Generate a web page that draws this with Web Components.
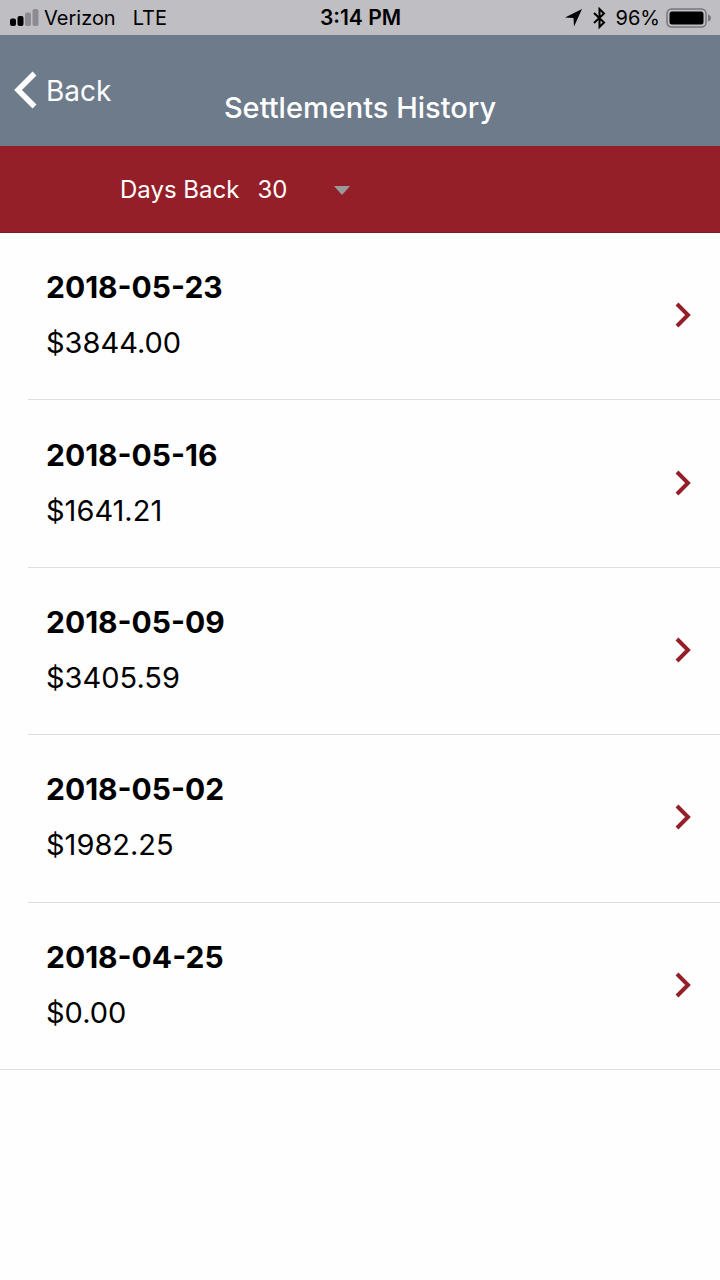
<!DOCTYPE html>
<html lang="en">
<head>
<meta charset="utf-8">
<meta name="viewport" content="width=device-width, initial-scale=1">
<title>Settlements History</title>
<style>
  body { margin: 0; background: #fefefe; color: #000; font-family: Inter, "Liberation Sans", sans-serif; }
</style>
</head>
<body>
<settlements-page></settlements-page>
<script>
class StatusBar extends HTMLElement {
  constructor() {
    super();
    this.attachShadow({ mode: 'open' }).innerHTML = `
      <style>
        :host { display: grid; grid-template-columns: 1fr auto 1fr; align-items: center; padding: 1px 9px 0 10px; background: #bfbec3; font-size: 20px; line-height: 34px; }
        div { display: flex; align-items: center; }
        .signal { margin-right: 5px; }
        .net { margin-left: 17px; }
        .time { font-size: 21px; font-weight: 600; }
        .right { justify-content: flex-end; }
        .bt { margin: 0 10px 0 11px; }
        .battery { margin-left: 6px; }
        svg { display: block; flex: none; }
      </style>
      <div>
        <svg class="signal" width="29" height="18" viewBox="0 0 29 18" aria-hidden="true">
          <rect x="0" y="9.500" width="6" height="7.500" rx="2"/><rect x="7.500" y="7" width="6" height="10" rx="2"/>
          <rect x="15" y="3.500" width="6" height="13.500" rx="2" fill="#8c8b91"/><rect x="22.500" y="0" width="6" height="17" rx="2" fill="#8c8b91"/>
        </svg>
        <span>Verizon</span><span class="net">LTE</span>
      </div>
      <span class="time">3:14 PM</span>
      <div class="right">
        <svg width="17" height="18" viewBox="0 0 17 18" aria-hidden="true"><path d="M17 0 9 17.500 8.500 9 0 8.500Z"/></svg>
        <svg class="bt" width="13" height="22" viewBox="0 0 13 22" fill="none" stroke="#000" stroke-width="2" aria-hidden="true"><path d="M1 6 11 15.500 6.500 20V2L11 6.500 1 16"/></svg>
        <span>96%</span>
        <svg class="battery" width="45" height="20" viewBox="0 0 45 20" aria-hidden="true">
          <rect x="1" y="1" width="39" height="18" rx="4.500" fill="none" stroke="#77767b" stroke-width="1.500"/>
          <rect x="3.500" y="3.500" width="34" height="13" rx="2.500"/><path d="M42 6.500q3 1 3 3.500t-3 3.500Z" fill="#77767b"/>
        </svg>
      </div>`;
  }
}

class NavHeader extends HTMLElement {
  constructor() {
    super();
    this.attachShadow({ mode: 'open' }).innerHTML = `
      <style>
        :host { display: grid; grid-template-columns: 1fr auto 1fr; align-items: start; padding-bottom: 18px; background: #6d7b8b; color: #fff; }
        button { display: flex; align-items: center; gap: 9px; justify-self: start; margin: 34px 0 0; padding: 0 0 0 14px; border: 0; background: none; color: inherit; font: 400 28px/40px Inter, "Liberation Sans", sans-serif; cursor: pointer; }
        button span { padding-top: 2px; }
        h1 { margin: 53px 0 0; font-size: 29px; line-height: 40px; font-weight: 500; }
        svg { display: block; }
      </style>
      <button type="button">
        <svg width="23" height="38" viewBox="0 0 23 38" fill="none" stroke="#fff" stroke-width="5.500" aria-hidden="true"><path d="M20.500 2.500 4 19 20.500 35.500"/></svg>
        <span>Back</span>
      </button>
      <h1><slot></slot></h1>`;
  }
}

class DaysFilter extends HTMLElement {
  constructor() {
    super();
    this.attachShadow({ mode: 'open' }).innerHTML = `
      <style>
        :host { display: flex; align-items: center; gap: 18px; padding: 28px 0 26px 120px; background: #951f28; border-bottom: 1px solid #7e1b23; color: #fff; font-size: 24px; line-height: 32px; }
        .field { display: grid; grid-template-columns: 93px; align-items: center; }
        .field > * { grid-area: 1 / 1; }
        select { appearance: none; width: 100%; margin: 0; padding: 0; border: 0; background: none; color: inherit; font: 400 24px/32px Inter, "Liberation Sans", sans-serif; }
        option { color: #000; }
        svg { justify-self: end; pointer-events: none; }
      </style>
      <label for="days">Days Back</label>
      <div class="field">
        <select id="days"><option>30</option><option>60</option><option>90</option></select>
        <svg width="16" height="9" viewBox="0 0 16 9" fill="#999" aria-hidden="true"><path d="M0 0H16L8 9Z"/></svg>
      </div>`;
  }
}

class SettlementRow extends HTMLElement {
  constructor() {
    super();
    this.attachShadow({ mode: 'open' }).innerHTML = `
      <style>
        :host { display: flex; padding-left: 28px; }
        :host(:last-child) { padding-left: 0; border-bottom: 1px solid #dedede; }
        a { flex: 1; display: flex; align-items: center; justify-content: space-between; padding: 26px 28px 28px 18px; border-bottom: 1px solid #dedede; color: inherit; text-decoration: none; line-height: 56px; }
        :host(:last-child) a { padding-left: 46px; border-bottom: 0; }
        .date { font-size: 30px; font-weight: 700; }
        .amount { font-size: 29px; }
        .date, .amount { display: block; }
        svg { display: block; flex: none; }
      </style>
      <a href="#">
        <span><span class="date"><slot name="date"></slot></span><span class="amount"><slot name="amount"></slot></span></span>
        <svg width="17" height="26" viewBox="0 0 17 26" fill="none" stroke="#951f28" stroke-width="4" aria-hidden="true"><path d="M2 2 13 13 2 24"/></svg>
      </a>`;
  }
}

class SettlementsPage extends HTMLElement {
  constructor() {
    super();
    const rows = [['2018-05-23', '$3844.00'], ['2018-05-16', '$1641.21'], ['2018-05-09', '$3405.59'], ['2018-05-02', '$1982.25'], ['2018-04-25', '$0.00']];
    this.attachShadow({ mode: 'open' }).innerHTML = `
      <style>
        :host { display: block; }
        main { display: grid; grid-auto-rows: 1fr; min-height: 837px; }
      </style>
      <status-bar></status-bar>
      <nav-header>Settlements History</nav-header>
      <days-filter></days-filter>
      <main>${rows.map(([date, amount]) => `<settlement-row><span slot="date">${date}</span><span slot="amount">${amount}</span></settlement-row>`).join('')}</main>`;
  }
}

customElements.define('status-bar', StatusBar);
customElements.define('nav-header', NavHeader);
customElements.define('days-filter', DaysFilter);
customElements.define('settlement-row', SettlementRow);
customElements.define('settlements-page', SettlementsPage);
</script>
</body>
</html>
